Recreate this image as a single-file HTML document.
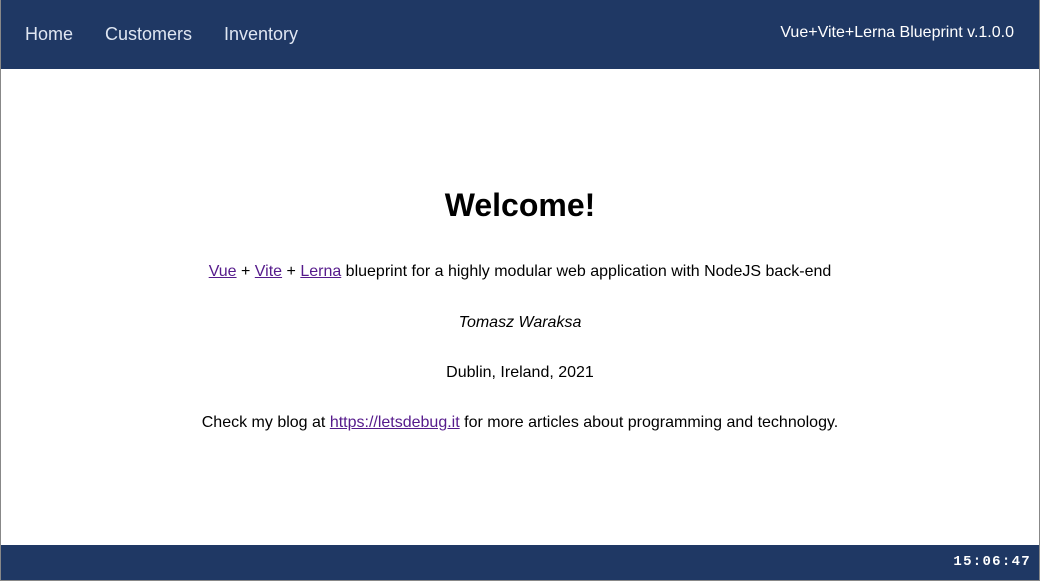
<!DOCTYPE html>
<html><head><style>
html,body{margin:0;padding:0;}
body{width:1040px;height:581px;position:relative;overflow:hidden;font-family:"Liberation Sans",sans-serif;background:#fff;}
.frame{position:absolute;left:0;top:0;width:1038px;height:579px;border:1px solid #888;}
.hdr{position:absolute;left:1px;top:0;width:1038px;height:69px;background:#1f3864;}
.nav{position:absolute;top:24px;font-size:18px;color:#dfe6f2;}
.ver{position:absolute;right:25px;top:24px;font-size:16px;color:#fff;}
.main{position:absolute;left:0;width:1040px;text-align:center;font-size:16px;color:#000;}
a{color:#551a8b;text-decoration:underline;}
.ftr{position:absolute;left:1px;top:545px;width:1038px;height:35px;background:#1f3864;}
.clk{position:absolute;right:8px;top:9px;font-family:"Liberation Mono",monospace;font-weight:bold;font-size:14px;letter-spacing:1.3px;color:#fff;}
</style></head><body>
<div class="frame"></div>
<div class="hdr">
<span class="nav" style="left:24px">Home</span>
<span class="nav" style="left:104px">Customers</span>
<span class="nav" style="left:223px">Inventory</span>
<span class="ver">Vue+Vite+Lerna Blueprint v.1.0.0</span>
</div>
<div class="main" style="top:187px;font-size:32px;font-weight:bold;">Welcome!</div>
<div class="main" style="top:263px;"><a>Vue</a> + <a>Vite</a> + <a>Lerna</a> blueprint for a highly modular web application with NodeJS back-end</div>
<div class="main" style="top:314px;font-style:italic;">Tomasz Waraksa</div>
<div class="main" style="top:364px;">Dublin, Ireland, 2021</div>
<div class="main" style="top:414px;">Check my blog at <a>https://letsdebug.it</a> for more articles about programming and technology.</div>
<div class="ftr"><span class="clk">15:06:47</span></div>
</body></html>
